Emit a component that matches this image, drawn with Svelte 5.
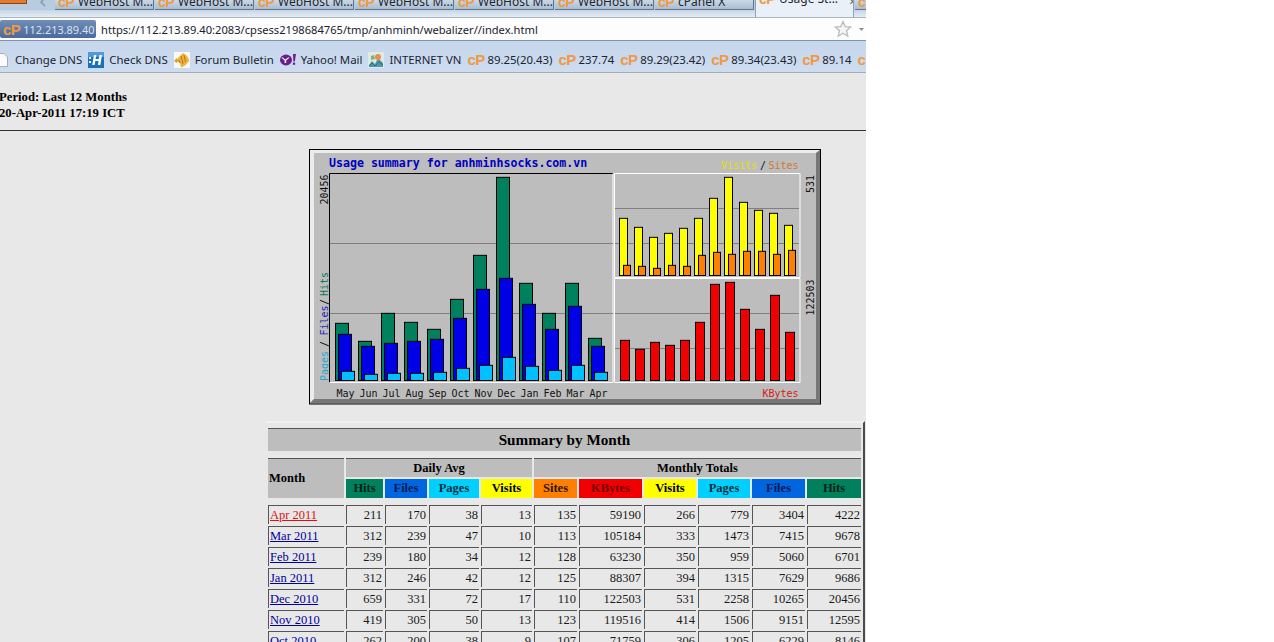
<script>
  const tabs = ['WebHost M...','WebHost M...','WebHost M...','WebHost M...','WebHost M...','WebHost M...','cPanel X'];
  const cpMarks = ['89.25(20.43)','237.74','89.29(23.42)','89.34(23.43)','89.14'];
  const months = ['May','Jun','Jul','Aug','Sep','Oct','Nov','Dec','Jan','Feb','Mar','Apr'];
  const z = (v) => 145 + v / 3;
  const hits = [535,589,505,532,553,463,331,97,415,505,415,580];
  const files = [568,604,595,589,583,520,433,400,478,553,484,604];
  const pages = [679,688,685,685,682,670,661,637,664,676,661,682];
  const visits = [220,247,277,265,250,220,160,97,172,196,205,241];
  const sites = [361,364,370,361,364,331,322,328,319,319,328,316];
  const kbytes = [586,613,592,601,586,532,418,412,493,553,451,562];
  const rows = [
    ['Apr 2011',211,170,38,13,135,59190,266,779,3404,4222],
    ['Mar 2011',312,239,47,10,113,105184,333,1473,7415,9678],
    ['Feb 2011',239,180,34,12,128,63230,350,959,5060,6701],
    ['Jan 2011',312,246,42,12,125,88307,394,1315,7629,9686],
    ['Dec 2010',659,331,72,17,110,122503,531,2258,10265,20456],
    ['Nov 2010',419,305,50,13,123,119516,414,1506,9151,12595],
    ['Oct 2010',262,200,38,9,107,71759,306,1205,6229,8146]
  ];
  const widths = [76,37,42,50,51,43,63,52,52,53,54];
</script>

<div class="page">
  <header class="chrome">
    <div class="tabstrip">
      <span class="appbtn"></span>
      <svg class="back" width="10" height="10" viewBox="0 0 10 10"><path d="M6 0 L2 4 L6 8" fill="none" stroke="#8a98a8" stroke-width="1.5"/></svg>
      {#each tabs as t}
        <div class="tab"><b class="cp">cP</b><span class="tabtext">{t}</span></div>
      {/each}
      <div class="tab active"><b class="cp">cP</b><span class="tabtext">Usage St...</span><span class="close">×</span></div>
      <div class="tab stub"><b class="cp">cP</b></div>
    </div>
    <div class="urlbar">
      <div class="identity"><b class="cp">cP</b><span>112.213.89.40</span></div>
      <span class="url">https://112.213.89.40:2083/cpsess2198684765/tmp/anhminh/webalizer//index.html</span>
      <svg class="star" width="18" height="18" viewBox="0 0 18 18"><path d="M9 1.5 L11.2 6.6 L16.7 7.1 L12.5 10.7 L13.8 16.2 L9 13.3 L4.2 16.2 L5.5 10.7 L1.3 7.1 L6.8 6.6 Z" fill="#f4f5f4" stroke="#b9bdb9" stroke-width="1.3"/></svg>
      <svg class="drop" width="5" height="3" viewBox="0 0 5 3"><path d="M0 0 H5 L2.5 3 Z" fill="#8b8f93"/></svg>
    </div>
    <nav class="bookmarks">
      <div class="bm first">
        <svg width="8" height="16" viewBox="0 0 8 16"><path d="M-4 1.5 H4 L7.5 5 V14.5 H-4 Z" fill="#fbfbfb" stroke="#a9acb0"/></svg>
        <span>Change DNS</span>
      </div>
      <div class="bm">
        <svg width="16" height="16" viewBox="0 0 16 16"><rect width="16" height="16" fill="#1d6fb8"/><rect width="16" height="5" fill="#4e9bd8"/><rect x="1" y="5" width="2" height="2" fill="#e8f3fb"/><rect x="1" y="9" width="2" height="2" fill="#e8f3fb"/><path d="M6 3 H8.3 L7.6 7 H10.8 L11.5 3 H14 L12.3 13 H9.9 L10.6 9 H7.3 L6.6 13 H4.2 Z" fill="#fff"/></svg>
        <span>Check DNS</span>
      </div>
      <div class="bm">
        <svg width="16" height="16" viewBox="0 0 16 16"><rect width="16" height="16" fill="#f8f8f4"/><path d="M1 9 L9 1 C13 3 15 6 15 9 C13 12 11 14 7 15.5 L6 11 Z" fill="#efb33a"/><path d="M7 4 L9 12 M10 3 L11.5 10 M4.5 8 L6.5 11" stroke="#b8751a" stroke-width="1"/><path d="M0 9 L3 6 V11 Z" fill="#d99a2b"/></svg>
        <span>Forum Bulletin</span>
      </div>
      <div class="bm">
        <svg width="16" height="16" viewBox="0 0 16 16"><ellipse cx="6" cy="8" rx="6" ry="5.4" fill="#6a1d8a"/><path d="M2.8 5.4 L5.4 7.6 L8 5.4 H9.6 L6.2 8.6 V11 H4.6 V8.6 L1.4 5.4 Z" fill="#fff"/><path d="M13 2 H16 L14.8 9.5 H13.4 Z" fill="#6a1d8a"/><rect x="12.9" y="10.6" width="2.2" height="2.2" fill="#6a1d8a"/></svg>
        <span>Yahoo! Mail</span>
      </div>
      <div class="bm">
        <svg width="16" height="16" viewBox="0 0 16 16"><rect width="16" height="16" fill="#dfe9e6"/><path d="M1 13 L4 9 L7 12 L10 6 L15 11 V15 H1 Z" fill="#4f93b8"/><circle cx="10" cy="5" r="3" fill="#e98d4e"/><path d="M3 4 L6 3 L7 7 L3 8 Z" fill="#7cb46a"/><path d="M1 14 L4 11 L7 14 L11 10 L15 13" fill="none" stroke="#2d7a4a"/></svg>
        <span>INTERNET VN</span>
      </div>
      {#each cpMarks as m}
        <div class="bm"><b class="cp big">cP</b><span>{m}</span></div>
      {/each}
      <div class="bm"><b class="cp big">cP</b></div>
    </nav>
  </header>

  <main class="content">
    <div class="period">Period: Last 12 Months<br />20-Apr-2011 17:19 ICT</div>
    <hr />
    <svg class="chart" width="512" height="256" viewBox="309 149 512 256">
      <rect x="309.5" y="149.5" width="511" height="254.5" fill="#bdbdbd" stroke="#000"/>
      <path d="M310 150 H820 L816 153 H314 V399 L310 403 Z" fill="#ececec"/>
      <path d="M820 150 V403 H310 L314 399 H816 V153 Z" fill="#777"/>

      <text x="329" y="167" class="title">Usage summary for anhminhsocks.com.vn</text>
      <text x="721" y="169" class="lbl visits">Visits</text>
      <text x="760" y="169" class="lbl">/</text>
      <text x="768.5" y="169" class="lbl sites">Sites</text>
      <text x="762.5" y="397" class="lbl kbytes">KBytes</text>
      {#each months as m, i}
        <text x={336.5 + i * 23} y="397" class="lbl">{m}</text>
      {/each}

      <text transform="translate(328 204.5) rotate(-90)" class="lbl">20456</text>
      <text transform="translate(328 381) rotate(-90)" class="lbl pages">Pages</text>
      <text transform="translate(328 347) rotate(-90)" class="lbl">/</text>
      <text transform="translate(328 335.5) rotate(-90)" class="lbl files">Files</text>
      <text transform="translate(328 305) rotate(-90)" class="lbl">/</text>
      <text transform="translate(328 296) rotate(-90)" class="lbl hits">Hits</text>
      <text transform="translate(814 193) rotate(-90)" class="lbl">531</text>
      <text transform="translate(814 315.5) rotate(-90)" class="lbl">122503</text>

      <path d="M329.5 382.5 V173.5 H613" fill="none" stroke="#000"/>
      <path d="M329.5 382.5 H613 V173.5" fill="none" stroke="#fff"/>
      <path d="M614.5 277 V173.5 H800" fill="none" stroke="#fff"/>
      <path d="M614.5 277.5 H800 V173.5" fill="none" stroke="#fff"/>
      <path d="M614.5 382 V278.5 H800" fill="none" stroke="#fff"/>
      <path d="M614.5 382.5 H800 V278.5" fill="none" stroke="#fff"/>

      <path d="M330 243.5 H613 M330 313.5 H613 M615 208.5 H799 M615 243.5 H799 M615 313.5 H799 M615 348.5 H799" stroke="#808080"/>

      {#each months as _, i}
        <rect x={335.5 + i * 23} y={z(hits[i])} width="13" height={380.5 - z(hits[i])} fill="#00805c" stroke="#000"/>
        <rect x={338.5 + i * 23} y={z(files[i])} width="13" height={380.5 - z(files[i])} fill="#0000e6" stroke="#000"/>
        <rect x={341.5 + i * 23} y={z(pages[i])} width="13" height={380.5 - z(pages[i])} fill="#00c0ff" stroke="#000"/>
        <rect x={619.5 + i * 15} y={z(visits[i])} width="8" height={275.5 - z(visits[i])} fill="#ffff00" stroke="#000"/>
        <rect x={623.5 + i * 15} y={z(sites[i])} width="7" height={275.5 - z(sites[i])} fill="#ff8000" stroke="#000"/>
        <rect x={620.5 + i * 15} y={z(kbytes[i])} width="9" height={380.5 - z(kbytes[i])} fill="#f00000" stroke="#000"/>
      {/each}
    </svg>

    <table>
      <colgroup>{#each widths as w}<col style="width:{w}px" />{/each}</colgroup>
      <tbody>
        <tr class="spacer top"><th colspan="11"></th></tr>
        <tr><th colspan="11" class="grey big-title">Summary by Month</th></tr>
        <tr class="spacer"><th colspan="11"></th></tr>
        <tr class="h19">
          <th rowspan="2" class="grey month">Month</th>
          <th colspan="4" class="grey">Daily Avg</th>
          <th colspan="6" class="grey">Monthly Totals</th>
        </tr>
        <tr class="h19">
          <th class="c-hits">Hits</th><th class="c-files">Files</th><th class="c-pages">Pages</th><th class="c-visits">Visits</th>
          <th class="c-sites">Sites</th><th class="c-kb">KBytes</th><th class="c-visits">Visits</th><th class="c-pages">Pages</th><th class="c-files">Files</th><th class="c-hits">Hits</th>
        </tr>
        <tr class="spacer"><th colspan="11"></th></tr>
        {#each rows as r, ri}
          <tr class="h19">
            <td class="mo"><a href="#m" class:current={ri === 0}>{r[0]}</a></td>
            {#each r.slice(1) as v}<td>{v}</td>{/each}
          </tr>
        {/each}
      </tbody>
    </table>
  </main>
</div>

<style>
  :global(body) { margin: 0; background: #fff; }
  .page { width: 866px; height: 642px; overflow: hidden; background: #e8e8e8; }

  .chrome { font-family: "Noto Sans", sans-serif; font-size: 11.4px; color: #1c2430; }
  .cp { font-family: "Liberation Sans", sans-serif; font-weight: 700; color: #ee9a45; font-size: 14px; letter-spacing: -0.5px; }
  .cp.big { font-size: 15px; letter-spacing: -0.6px; width: 15px; }

  .tabstrip { height: 17px; display: flex; overflow: hidden; background: linear-gradient(#b9cbde 0 10px, #c6d5e6 10px, #e6edf5 17px); }
  .appbtn { width: 26px; height: 3px; margin-right: 10px; background: #e8792a; border: solid #7d4a28; border-width: 0 1px 1px 0; flex: none; }
  .back { margin-left: 2px; margin-right: 6px; flex: none; margin-top: -2px; }
  .tab { width: 99px; height: 10px; margin-right: 1px; flex: none; display: flex; align-items: flex-end; padding-left: 3px; box-sizing: border-box; overflow: hidden; background: linear-gradient(#cbd8e6, #a9bdd2); border: solid #63778c; border-width: 0 1px 1px 0; line-height: 14px; font-size: 12px; }
  .tab .cp { width: 20px; flex: none; }
  .tabtext { white-space: nowrap; flex: none; color: #1d2630; }
  .tab.active { height: 17px; background: #e9f0f7; border: solid #8fa2b5; border-width: 0 1px; align-items: flex-start; }
  .tab.active .cp, .tab.active .tabtext { margin-top: -8px; }
  .close { margin-left: 11px; margin-top: -6px; color: #566; font-size: 13px; }
  .tab.stub { width: 20px; }

  .urlbar { height: 24px; box-sizing: border-box; display: flex; align-items: center; background: #fdfdfe; border-top: 1px solid #a9b5c2; border-bottom: 1px solid #8294a6; }
  .identity { width: 96px; height: 18px; box-sizing: border-box; display: flex; align-items: center; gap: 3px; padding-left: 3px; background: linear-gradient(#6f8db7, #4c6a9a); color: #d9e3f1; border-radius: 2px; font-size: 10.9px; }
  .identity .cp { font-size: 15px; }
  .url { margin-left: 5px; white-space: nowrap; font-size: 11.15px; color: #1a222c; }
  .star { margin-left: auto; flex: none; }
  .drop { margin: 0 2px 0 7px; flex: none; }

  .bookmarks { height: 32px; box-sizing: border-box; padding-top: 6px; display: flex; align-items: center; gap: 6px; overflow: hidden; background: linear-gradient(#c6d6ec, #cddcef); border-bottom: 1px solid #a3adb8; }
  .bm { display: flex; align-items: center; gap: 5px; flex: none; white-space: nowrap; }
  .bm.first { gap: 7px; }

  .content { font-family: "Liberation Serif", serif; font-size: 12.5px; color: #000; }
  .period { font-weight: 700; line-height: 16px; padding-top: 16px; margin-left: -1px; font-size: 12.7px; }
  hr { margin: 9px 0 0; height: 1px; border: 0; background: #333; }
  .chart { display: block; margin: 18px 0 0 309px; }

  .title { font: 700 11.6px "DejaVu Sans Mono", monospace; fill: #0000c0; }
  .lbl { font: 10px "DejaVu Sans Mono", monospace; fill: #111; }
  .visits { fill: #e4e000; }
  .sites { fill: #d07a30; }
  .kbytes { fill: #d81818; }
  .pages { fill: #2aa5cf; }
  .files { fill: #1c1cc0; }
  .hits { fill: #0a7a5c; }

  table { margin: 16px 0 0 266px; width: 599px; table-layout: fixed; border-collapse: separate; border-spacing: 2px; border-style: solid; border-width: 2px 2px 0 0; border-color: #f0f0f0 #4a4a4a #4a4a4a #f0f0f0; box-sizing: border-box; font-size: 12.5px; }
  th, td { padding: 0; overflow: hidden; box-sizing: border-box; }
  .spacer th { height: 3px; line-height: 0; font-size: 0; }
  .spacer.top th { height: 1px; }
  .h19 > th, .h19 > td { height: 19px; line-height: 17px; }
  th { font-weight: 700; text-align: center; }
  .grey { background: #bdbdbd; border-top: 1px solid #555; }
  .big-title { height: 23px; font-size: 15.2px; line-height: 22px; }
  .month { text-align: left; padding-left: 1px; }
  .c-hits { background: #00805c; color: #00231a; }
  .c-files { background: #0066e0; color: #001a55; }
  .c-pages { background: #00d0ff; color: #04303c; }
  .c-visits { background: #ffff00; }
  .c-sites { background: #ff8000; color: #2a1500; }
  .c-kb { background: #f00000; color: #7a0000; }
  td { text-align: right; padding-right: 1px; color: #1a1a1a; border-top: 1px solid #555; border-left: 1px solid #555; }
  td.mo { text-align: left; padding-left: 1px; padding-right: 0; }
  a { color: #00009c; }
  a.current { color: #e01010; }
</style>
